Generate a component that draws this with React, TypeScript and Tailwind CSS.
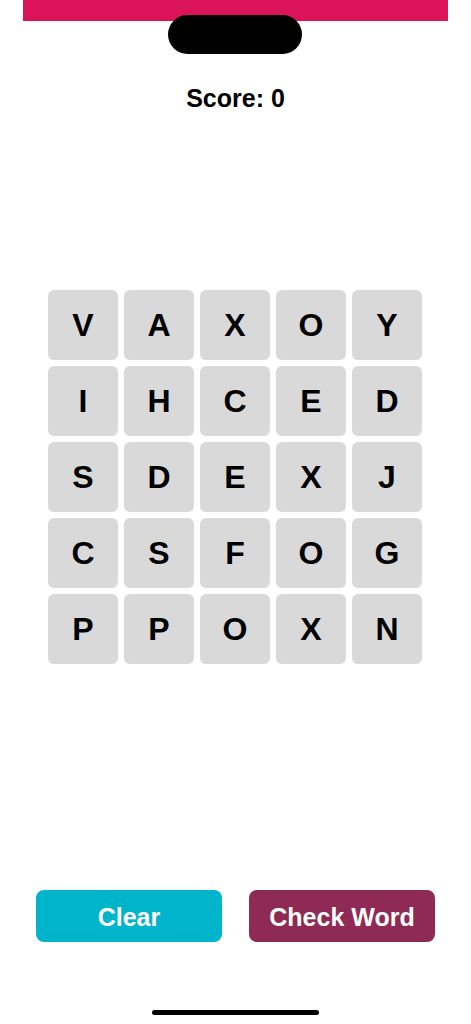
const GRID = [
  ["V", "A", "X", "O", "Y"],
  ["I", "H", "C", "E", "D"],
  ["S", "D", "E", "X", "J"],
  ["C", "S", "F", "O", "G"],
  ["P", "P", "O", "X", "N"],
];

export default function App() {
  return (
    <div className="relative flex h-[1024px] w-[471px] flex-col bg-white font-['Liberation_Sans',Arial,sans-serif] text-black">
      {/* status bar strip */}
      <div className="mx-[23px] h-[21px] bg-[#DB1459]" />
      <div className="absolute left-[168px] top-[15px] h-[39px] w-[134px] rounded-full bg-black" />

      <div className="mt-[62px] text-center text-[25px] font-bold leading-[30px]">Score: 0</div>

      <div className="mt-[177px] flex pl-[48px]">
        <div className="grid grid-cols-5 gap-[6px]">
          {GRID.flat().map((letter, i) => (
            <div
              key={i}
              className="flex h-[70px] w-[70px] items-center justify-center rounded-[6px] bg-[#D9D9D9] text-[32px] font-bold"
            >
              {letter}
            </div>
          ))}
        </div>
      </div>

      <div className="mt-auto flex justify-between px-[36px]">
        <button className="h-[52px] w-[186px] rounded-[8px] bg-[#00B4CC] pt-[3px] text-[25px] font-bold text-white">
          Clear
        </button>
        <button className="h-[52px] w-[186px] rounded-[8px] bg-[#8E2A53] pt-[3px] text-[25px] font-bold text-white">
          Check Word
        </button>
      </div>

      <div className="mb-[9px] mt-[68px] flex justify-center">
        <div className="h-[5px] w-[167px] rounded-full bg-black" />
      </div>
    </div>
  );
}
